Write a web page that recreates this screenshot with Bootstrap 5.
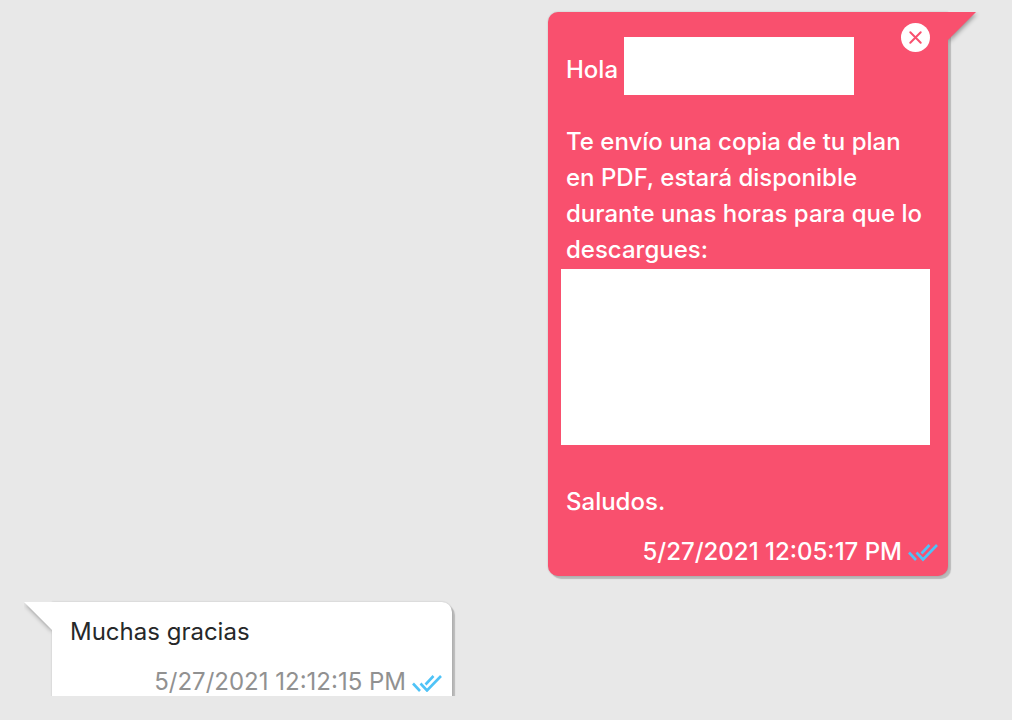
<!DOCTYPE html>
<html lang="es">
<head>
<meta charset="utf-8">
<meta name="viewport" content="width=device-width, initial-scale=1">
<title>Chat</title>
<link href="https://cdn.jsdelivr.net/npm/bootstrap@5.3.0/dist/css/bootstrap.min.css" rel="stylesheet">
<style>
  body { background: #e8e8e8; font-family: Inter, "Liberation Sans", sans-serif; font-size: 24px; line-height: 36px; }
  .chat-log { height: calc(100vh - 24px); padding: 12px 40px 0 28px; gap: 26px; }
  .bubble { width: 400px; max-width: 100%; padding-bottom: 6px; border-radius: 10px; box-shadow: 3px 3px 1px rgba(0,0,0,.2), 0 0 2px rgba(0,0,0,.2); }
  .bubble-out { background: #f9506e; color: #fff; font-weight: 500; padding-top: 25px; border-top-right-radius: 0; }
  .bubble-in { background: #fff; color: #262829; padding-top: 12px; border-top-left-radius: 0; }
  .bubble p { margin: 0; padding: 0 18px; }
  .tail { position: absolute; top: 0; width: 32px; height: 36px; overflow: hidden; }
  .bubble-out .tail { left: 100%; }
  .bubble-in .tail { right: 100%; width: 28px; }
  .tail svg { display: block; overflow: visible; filter: drop-shadow(1px 2px 2px rgba(0,0,0,.35)); }
  .close-btn { position: absolute; top: 11px; right: 18px; width: 29px; height: 29px; color: #f9506e; }
  .greeting { margin-bottom: 29px; padding-left: 18px; gap: 6px; }
  .greeting p { padding: 0 0 7px; }
  .hidden-name { width: 230px; height: 58px; }
  .hidden-link { height: 176px; margin: 1px 18px 39px 13px; }
  .meta { margin-top: 14px; padding-right: 10px; gap: 6px; }
  .bubble-in .meta time { color: #919191; }
  .ticks { color: #4fc3f7; }
</style>
</head>
<body>
<main class="mx-4 overflow-hidden">
  <div class="chat-log d-flex flex-column">
    <article class="bubble bubble-out position-relative align-self-end flex-shrink-0">
      <span class="tail" aria-hidden="true"><svg width="28" height="28"><path d="M0 0H28L0 28Z" fill="#f9506e"/></svg></span>
      <button type="button" class="close-btn btn p-0 border-0 rounded-circle bg-white d-flex" aria-label="Eliminar mensaje">
        <svg width="29" height="29" viewBox="0 0 29 29" fill="none" stroke="currentColor" stroke-width="2" stroke-linecap="round"><path d="M9.3 9.3l10.4 10.4M19.7 9.3L9.3 19.7"/></svg>
      </button>
      <div class="greeting d-flex align-items-end">
        <p>Hola</p>
        <span class="hidden-name bg-white"></span>
      </div>
      <p>Te envío una copia de tu plan en PDF, estará disponible durante unas horas para que lo descargues:</p>
      <div class="hidden-link bg-white"></div>
      <p>Saludos.</p>
      <div class="meta d-flex justify-content-end align-items-center">
        <time datetime="2021-05-27T12:05:17">5/27/2021 12:05:17 PM</time>
        <svg class="ticks" width="30" height="20" viewBox="0 0 30 20" fill="none" stroke="currentColor" stroke-width="2.6" role="img" aria-label="Leído"><path d="M1 10.500L8 18M8.500 10.500l6.500 7L29 3M13.500 11.500L21.500 3"/></svg>
      </div>
    </article>
    <article class="bubble bubble-in position-relative align-self-start flex-shrink-0">
      <span class="tail" aria-hidden="true"><svg width="28" height="28"><path d="M0 0H28V28Z" fill="#fff"/></svg></span>
      <p>Muchas gracias</p>
      <div class="meta d-flex justify-content-end align-items-center">
        <time datetime="2021-05-27T12:12:15">5/27/2021 12:12:15 PM</time>
        <svg class="ticks" width="30" height="20" viewBox="0 0 30 20" fill="none" stroke="currentColor" stroke-width="2.6" role="img" aria-label="Leído"><path d="M1 11.500L8 19M8.500 11.500l6.500 7L29 4M13.500 12.500L21.500 4"/></svg>
      </div>
    </article>
  </div>
</main>
<script src="https://cdn.jsdelivr.net/npm/bootstrap@5.3.0/dist/js/bootstrap.bundle.min.js"></script>
</body>
</html>
